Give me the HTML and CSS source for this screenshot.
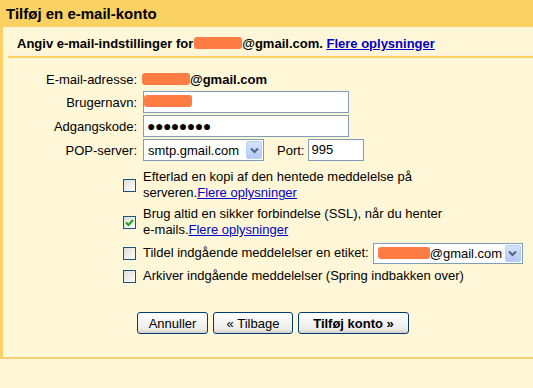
FILE: index.html
```html
<!DOCTYPE html>
<html lang="da">
<head>
    <meta charset="UTF-8">
    <title>Tilføj en e-mail-konto</title>
    <link rel="stylesheet" href="styles.css">
</head>
<body>
    <div class="header">Tilføj en e-mail-konto</div>
    <div class="panel">
        <div class="intro">
            Angiv e-mail-indstillinger for<span class="redact redact-intro"></span>@gmail.com. <a href="#">Flere oplysninger</a>
        </div>

        <div class="row row-email">
            <label class="label">E-mail-adresse:</label>
            <span class="email"><span class="redact redact-email"></span>@gmail.com</span>
        </div>
        <div class="row">
            <label class="label">Brugernavn:</label>
            <div class="field field-wide"><span class="redact redact-user"></span></div>
        </div>
        <div class="row">
            <label class="label">Adgangskode:</label>
            <div class="field field-wide password">&#9679;&#9679;&#9679;&#9679;&#9679;&#9679;&#9679;&#9679;</div>
        </div>
        <div class="row">
            <label class="label">POP-server:</label>
            <div class="combo combo-server">
                <span class="combo-text">smtp.gmail.com</span>
                <span class="combo-btn">
                    <svg width="9" height="7" viewBox="0 0 9 7"><path d="M1 1.5 L4.5 5 L8 1.5" fill="none" stroke="#4d6185" stroke-width="2"/></svg>
                </span>
            </div>
            <label class="port-label">Port:</label>
            <div class="field field-port">995</div>
        </div>

        <div class="check-row check-first">
            <span class="checkbox"></span>
            <div class="check-text">Efterlad en kopi af den hentede meddelelse på<br>serveren.<a href="#">Flere oplysninger</a></div>
        </div>
        <div class="check-row">
            <span class="checkbox checked">
                <svg width="9" height="9" viewBox="0 0 9 9"><path d="M1 4.5 L3.5 7 L8 2" fill="none" stroke="#21a121" stroke-width="2"/></svg>
            </span>
            <div class="check-text">Brug altid en sikker forbindelse (SSL), når du henter<br>e-mails.<a href="#">Flere oplysninger</a></div>
        </div>
        <div class="check-row check-inline">
            <span class="checkbox"></span>
            <div class="check-text">Tildel indgående meddelelser en etiket:</div>
            <div class="combo combo-label">
                <span class="combo-text"><span class="redact redact-label"></span>@gmail.com</span>
                <span class="combo-btn">
                    <svg width="9" height="7" viewBox="0 0 9 7"><path d="M1 1.5 L4.5 5 L8 1.5" fill="none" stroke="#4d6185" stroke-width="2"/></svg>
                </span>
            </div>
        </div>
        <div class="check-row check-single">
            <span class="checkbox"></span>
            <div class="check-text">Arkiver indgående meddelelser (Spring indbakken over)</div>
        </div>

        <div class="buttons">
            <button class="btn btn-cancel">Annuller</button>
            <button class="btn btn-back">&laquo; Tilbage</button>
            <button class="btn btn-add">Tilføj konto &raquo;</button>
        </div>
    </div>
</body>
</html>
```

FILE: styles.css
```css
body, html {
    margin: 0;
    height: 100%;
    font-family: Arial, "Liberation Sans", sans-serif;
    font-size: 13px;
    background-color: #fff7d7;
    color: #000;
}
a {
    color: #0000cc;
    text-decoration: underline;
}
.header {
    height: 27px;
    line-height: 27px;
    padding-left: 6px;
    background-color: #fad163;
    font-size: 15px;
    font-weight: bold;
}
.panel {
    border-left: 3px solid #fad163;
    border-bottom: 2px solid #f5d070;
    height: 330px;
}
.intro {
    margin-left: 5px;
    padding: 9px 0 0 9px;
    height: 20px;
    line-height: 16px;
    font-weight: bold;
    border-bottom: 2px solid #fad163;
    box-shadow: 0 -2px 0 #fdf0dc inset;
}
.intro a {
    font-weight: bold;
}
.redact {
    display: inline-block;
    height: 12px;
    background-color: #ff7c45;
    border-radius: 3px;
    vertical-align: -1px;
}
.redact-intro {
    width: 48px;
    margin-left: 1px;
}
.redact-email {
    width: 48px;
}
.redact-user {
    width: 48px;
    margin-left: -3px;
}
.redact-label {
    width: 52px;
}
.row {
    display: flex;
    align-items: center;
    height: 22px;
    margin-bottom: 2px;
}
.row-email {
    margin-top: 11px;
    height: 20px;
    margin-bottom: 2px;
}
.label {
    width: 134px;
    text-align: right;
    color: #000;
}
.email {
    margin-left: 5px;
    font-weight: bold;
}
.field {
    box-sizing: border-box;
    height: 22px;
    margin-left: 6px;
    padding: 0 3px;
    line-height: 20px;
    background-color: #fff;
    border: 1px solid #7f9db9;
    font-size: 13px;
}
.field-wide {
    width: 206px;
}
.password {
    font-size: 14px;
    letter-spacing: -0.5px;
}
.field-port {
    width: 56px;
    margin-left: 4px;
    padding-left: 2px;
}
.combo {
    box-sizing: border-box;
    display: flex;
    align-items: center;
    height: 22px;
    background-color: #fff;
    border: 1px solid #7f9db9;
    padding: 1px;
}
.combo-text {
    flex: 1;
    padding-left: 3px;
    white-space: nowrap;
}
.combo-btn {
    display: flex;
    align-items: center;
    justify-content: center;
    width: 16px;
    height: 100%;
    box-sizing: border-box;
    border: 1px solid #b9cdf5;
    border-radius: 2px;
    background: linear-gradient(#d6e3fd, #b3c8f5);
}
.combo-server {
    width: 121px;
    margin-left: 6px;
}
.port-label {
    margin-left: 13px;
}
.check-row {
    display: flex;
    align-items: center;
    margin-left: 120px;
    margin-bottom: 4px;
}
.check-first {
    margin-top: 8px;
    margin-bottom: 5px;
}
.check-text {
    margin-left: 7px;
    line-height: 16px;
}
.checkbox {
    box-sizing: border-box;
    display: flex;
    align-items: center;
    justify-content: center;
    width: 13px;
    height: 13px;
    border: 1px solid #1c5180;
    background: linear-gradient(135deg, #dcdcd7, #ffffff);
}
.check-inline {
    height: 22px;
    margin-bottom: 2px;
}
.combo-label {
    width: 150px;
    height: 21px;
    margin-left: 4px;
}
.check-single {
    height: 20px;
}
.buttons {
    display: flex;
    gap: 5px;
    margin: 26px 0 0 134px;
}
.btn {
    height: 22px;
    padding: 0 8px;
    font-family: Arial, "Liberation Sans", sans-serif;
    font-size: 13px;
    color: #000;
    border: 1px solid #003c74;
    border-radius: 3px;
    background: linear-gradient(#ffffff, #ececeb 80%, #d6d0c5);
}
.btn-cancel {
    width: 71px;
}
.btn-back {
    width: 80px;
}
.btn-add {
    width: 111px;
    font-weight: bold;
}
```
